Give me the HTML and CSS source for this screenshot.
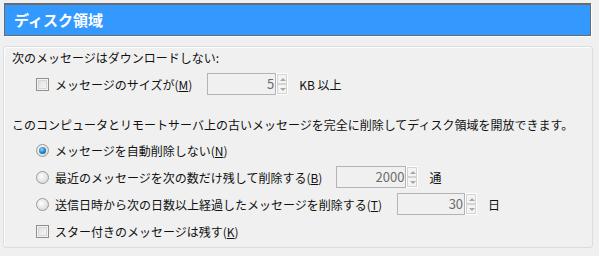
FILE: index.html
```html
<!DOCTYPE html>
<html lang="ja">
<head>
<meta charset="utf-8">
<link rel="stylesheet" href="styles.css">
</head>
<body>
<div class="header">ディスク領域</div>
<div class="panel">
  <div class="heading">次のメッセージはダウンロードしない:</div>
  <div class="row first">
    <span class="check"></span>
    <span class="label">メッセージのサイズが(<u>M</u>)</span>
    <span class="spin w69"><span class="field">5</span><span class="arrows"><span class="up"></span><span class="down"></span></span></span>
    <span class="unit">KB 以上</span>
  </div>
  <div class="heading second">このコンピュータとリモートサーバ上の古いメッセージを完全に削除してディスク領域を開放できます。</div>
  <div class="rows">
    <div class="row">
      <span class="radio on"></span>
      <span class="label">メッセージを自動削除しない(<u>N</u>)</span>
    </div>
    <div class="row">
      <span class="radio"></span>
      <span class="label">最近のメッセージを次の数だけ残して削除する(<u>B</u>)</span>
      <span class="spin w70"><span class="field">2000</span><span class="arrows"><span class="up"></span><span class="down"></span></span></span>
      <span class="unit">通</span>
    </div>
    <div class="row">
      <span class="radio"></span>
      <span class="label">送信日時から次の日数以上経過したメッセージを削除する(<u>T</u>)</span>
      <span class="spin w68"><span class="field">30</span><span class="arrows"><span class="up"></span><span class="down"></span></span></span>
      <span class="unit">日</span>
    </div>
    <div class="row">
      <span class="check"></span>
      <span class="label">スター付きのメッセージは残す(<u>K</u>)</span>
    </div>
  </div>
</div>
</body>
</html>
```
FILE: styles.css
```css
* { box-sizing: border-box; }
html, body { margin: 0; padding: 0; }
body {
  background: #f0f0f0;
  font-family: "Noto Sans CJK JP", "Noto Sans", sans-serif;
  font-size: 12px;
  color: #111111;
  width: 599px;
  height: 256px;
  overflow: hidden;
}
.header {
  margin: 3px 0 0 4px;
  width: 587px;
  height: 33px;
  background: #3399ff;
  border: 1px solid #6b6b6b;
  border-top-width: 2px;
  box-shadow: 1px 1px 0 #ffffff;
  color: #ffffff;
  font-weight: bold;
  font-size: 15px;
  line-height: 29px;
  padding-left: 9px;
}
.panel {
  margin: 10px 0 0 3px;
  width: 590px;
  height: 202px;
  border: 1px solid #d8dde2;
  border-radius: 3px;
  box-shadow: inset 1px 1px 0 #ffffff;
  padding: 2px 0 0 8px;
}
.heading {
  height: 18px;
  line-height: 18px;
  white-space: nowrap;
}
.heading.second { margin-top: 21px; }
.row {
  display: flex;
  align-items: center;
  height: 22px;
  padding-left: 24px;
  white-space: nowrap;
}
.row.first { margin-top: 6px; }
.rows {
  margin-top: 5px;
  display: flex;
  flex-direction: column;
  gap: 5px;
}
.label { margin-left: 6px; }
.label u { text-underline-offset: 1px; }
.check {
  width: 13px;
  height: 13px;
  border: 1px solid #8f8f8f;
  background: linear-gradient(135deg, #dcdcdc, #fbfbfb);
  box-shadow: inset 0 0 0 1px #f4f4f4, inset 0 0 0 2px #d6d6d6;
  flex: none;
}
.radio {
  width: 13px;
  height: 13px;
  border-radius: 50%;
  border: 1px solid #9a9a9a;
  background: radial-gradient(circle at 40% 40%, #fdfdfd, #dedede 70%);
  flex: none;
  position: relative;
}
.radio.on::after {
  content: "";
  position: absolute;
  left: 2px;
  top: 2px;
  width: 7px;
  height: 7px;
  border-radius: 50%;
  background: radial-gradient(circle at 40% 35%, #8fd3ff, #1f7fc9 55%, #0b4d85);
}
.spin {
  display: flex;
  height: 22px;
  flex: none;
}
.w69 { margin-left: 15px; }
.w70 { margin-left: 14px; }
.w68 { margin-left: 15px; }
.field {
  border: 1px solid #b4b4b4;
  background: #f0f0f0;
  color: #6d6d6d;
  text-align: right;
  line-height: 20px;
  padding-right: 1px;
  font-size: 13px;
}
.w69 .field { width: 69px; }
.w70 .field { width: 70px; }
.w68 .field { width: 68px; }
.arrows {
  width: 12px;
  height: 22px;
  background: #ffffff;
  display: flex;
  flex-direction: column;
  padding: 1px;
}
.up, .down {
  flex: 1;
  border: 1px solid #d4d4d4;
  background: #f4f4f4;
  position: relative;
}
.up::after, .down::after {
  content: "";
  position: absolute;
  left: 2px;
  top: 3px;
  border-left: 3px solid transparent;
  border-right: 3px solid transparent;
}
.up::after { border-bottom: 3px solid #a8a8a8; }
.down::after { border-top: 3px solid #a8a8a8; }
.unit { margin-left: 11px; }
```
